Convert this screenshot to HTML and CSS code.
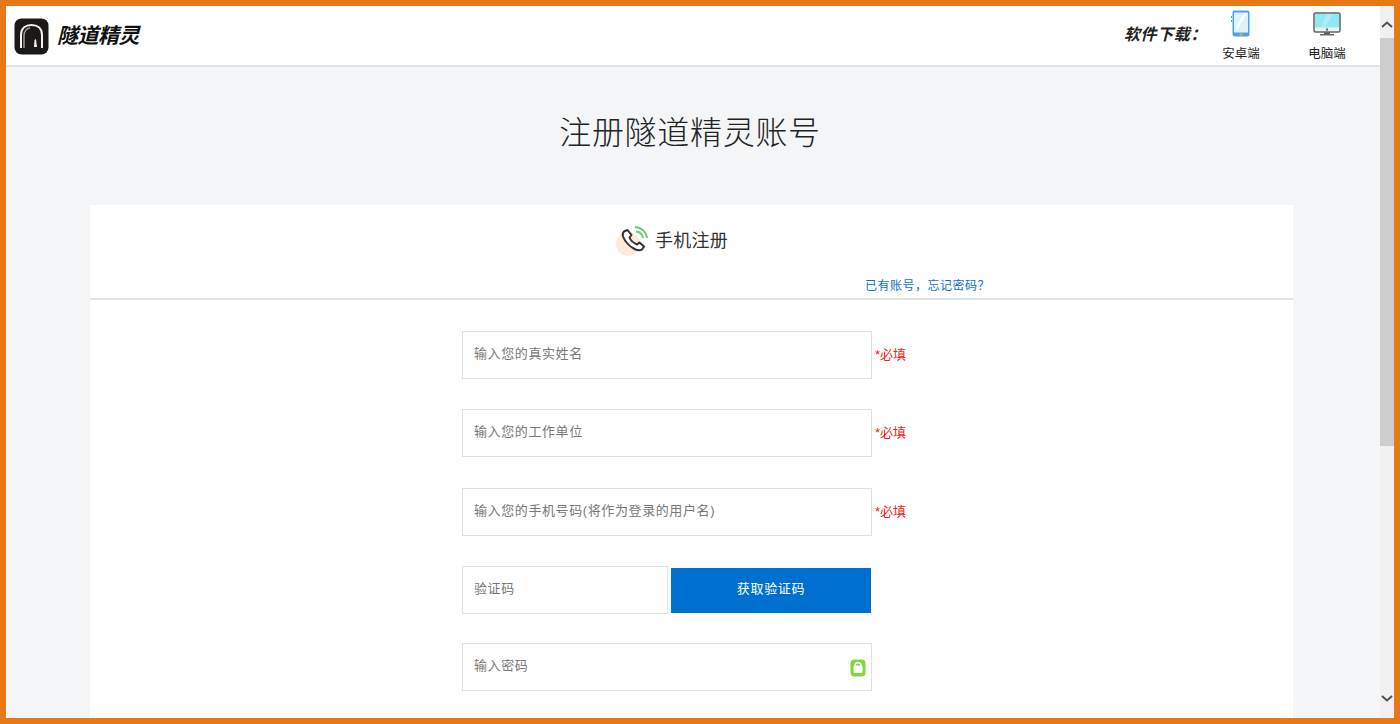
FILE: index.html
```html
<!DOCTYPE html>
<html lang="zh-CN">
<head>
<meta charset="utf-8">
<title>注册隧道精灵账号</title>
<link rel="stylesheet" href="styles.css">
</head>
<body>
<div class="frame">
  <div class="page">
    <header class="topbar">
      <div class="brand">
        <svg class="logo" width="35" height="37" viewBox="0 0 35 37">
          <rect x="0.5" y="0.5" width="34" height="36" rx="7" fill="#1c1a19"/>
          <path d="M7 30V17C7 10 12 7 17.500 7S28 10 28 17V30" fill="none" stroke="#f2f2f2" stroke-width="2"/>
          <path d="M10 30V18C10 13 13 10 16 10" fill="none" stroke="#9a9a9a" stroke-width="1.500"/>
          <path d="M20.500 22L22 21L23 29H20Z" fill="#eeeeee"/>
        </svg>
        <span class="brand-name">隧道精灵</span>
      </div>
      <div class="downloads">
        <span class="dl-label">软件下载：</span>
        <div class="dl-item dl-android">
          <svg width="20" height="27" viewBox="0 0 20 27">
            <rect x="1.500" y="0.500" width="17" height="26" rx="2" fill="#4aa3f0"/>
            <rect x="3" y="2.500" width="14" height="20" fill="#dff1fc"/>
            <path d="M5 17L13 3H16L6 20Z" fill="#ffffff"/>
            <rect x="8.500" y="23.500" width="3" height="2" fill="#f5a623"/>
            <path d="M0.500 6V8M0.500 10V12" stroke="#4aa3f0"/>
          </svg>
          <span class="dl-text">安卓端</span>
        </div>
        <div class="dl-item dl-pc">
          <svg width="28" height="25" viewBox="0 0 28 25">
            <rect x="1" y="1" width="26" height="19" rx="1.500" fill="#f0f0f0" stroke="#5f646a" stroke-width="1.500"/>
            <rect x="2" y="2" width="24" height="13.500" fill="#90e9ee"/>
            <path d="M14 2L20 2L12 15.500L8 15.500Z" fill="#a9f0f3"/>
            <rect x="13" y="16.500" width="2" height="2" fill="#5f646a"/>
            <path d="M11 20H17V22H11ZM7 22H21V23.500H7Z" fill="#5f646a"/>
          </svg>
          <span class="dl-text">电脑端</span>
        </div>
      </div>
    </header>

    <h1 class="title">注册隧道精灵账号</h1>

    <main class="card">
      <div class="tab">
        <div class="tab-head">
          <svg class="tab-icon" width="34" height="34" viewBox="0 0 34 34">
            <circle cx="12" cy="19" r="12" fill="#fdebd8"/>
            <path d="M8 6.500L11.500 5L15.500 10L13.500 12.500C14.500 15 17.500 18 21 19.500L23.500 17.500L28 21.500L26 24.500C24 26 21.500 25.500 18.500 24C13 21 9 16.500 7 11.500C6.500 9.500 7 7.500 8 6.500Z" fill="#ffffff" stroke="#303030" stroke-width="2" stroke-linejoin="round"/>
            <path d="M20 6.500C23.500 7 26.500 9.500 27 13" fill="none" stroke="#6cc96c" stroke-width="1.800"/>
            <path d="M19 2C25.500 2.500 30.500 7 31 13" fill="none" stroke="#6cc96c" stroke-width="1.800"/>
          </svg>
          <span class="tab-label">手机注册</span>
        </div>
        <a class="tab-link" href="#">已有账号，忘记密码？</a>
      </div>

      <form class="form">
        <div class="row">
          <div class="field"><span class="ph">输入您的真实姓名</span></div>
          <span class="req">*必填</span>
        </div>
        <div class="row">
          <div class="field"><span class="ph">输入您的工作单位</span></div>
          <span class="req">*必填</span>
        </div>
        <div class="row row-phone">
          <div class="field"><span class="ph">输入您的手机号码(将作为登录的用户名)</span></div>
          <span class="req">*必填</span>
        </div>
        <div class="row">
          <div class="code-group">
            <div class="field field-code"><span class="ph">验证码</span></div>
            <button class="code-btn" type="button">获取验证码</button>
          </div>
        </div>
        <div class="row row-last">
          <div class="field field-pass">
            <span class="ph">输入密码</span>
            <svg width="16" height="18" viewBox="0 0 16 18">
              <rect x="0.500" y="0.500" width="15" height="17" rx="4" fill="#7ed63c"/>
              <path d="M5 7V6C5 3 11 3 11 6V7" fill="none" stroke="#ffffff" stroke-width="1.500"/>
              <rect x="3.500" y="6.500" width="9" height="7.500" rx="1" fill="#ffffff"/>
            </svg>
          </div>
        </div>
      </form>
    </main>
  </div>

  <div class="scrollbar">
    <svg width="14" height="14" viewBox="0 0 14 14"><path d="M2 9L7 4.500L12 9" fill="none" stroke="#505050" stroke-width="2"/></svg>
    <div class="thumb"></div>
    <div class="track"></div>
    <svg width="14" height="14" viewBox="0 0 14 14"><path d="M2 5L7 9.500L12 5" fill="none" stroke="#505050" stroke-width="2"/></svg>
  </div>
</div>
</body>
</html>
```
FILE: styles.css
```css
* { box-sizing: border-box; }
html, body { margin: 0; height: 100%; overflow: hidden; }
body { font-family: "Liberation Sans", "Noto Sans CJK SC", sans-serif; }

.frame {
  width: 1400px;
  height: 724px;
  border: 6px solid #e67817;
  display: flex;
  overflow: hidden;
}
.page { flex: 1; min-width: 0; background: #f4f5f7; overflow: hidden; }

.topbar {
  height: 61px;
  background: #fff;
  border-bottom: 2px solid #e2e2e2;
  display: flex;
  justify-content: space-between;
  padding-left: 8px;
}
.brand { display: flex; align-items: center; gap: 8px; padding-top: 1px; }
.logo { display: block; }
.brand-name {
  font-size: 21px;
  font-weight: 700;
  font-style: italic;
  letter-spacing: -0.500px;
  color: #111;
  margin-top: -4px;
}
.downloads { display: flex; align-items: flex-start; }
.dl-label {
  font-size: 16px;
  font-weight: 700;
  font-style: italic;
  letter-spacing: 0.600px;
  color: #222;
  margin-top: 15px;
  margin-right: 14px;
}
.dl-item { display: flex; flex-direction: column; align-items: center; width: 40px; }
.dl-item svg { display: block; height: 27px; }
.dl-pc { margin-left: 46px; margin-right: 33px; }
.dl-android { margin-top: 4px; }
.dl-pc { margin-top: 5px; }
.dl-text { font-size: 12.500px; line-height: 17px; color: #222; margin-top: 9px; white-space: nowrap; }
.dl-pc .dl-text { margin-top: 8px; }

.title {
  margin: 0;
  height: 138px;
  padding: 44px 6px 0 0;
  text-align: center;
  font-size: 32px;
  line-height: 44px;
  font-weight: 300;
  letter-spacing: 0.700px;
  color: #222;
}

.card {
  margin: 0 87px 0 84px;
  background: #fff;
  height: 600px;
}
.tab {
  position: relative;
  height: 95px;
  border-bottom: 2px solid #e2e2e2;
}
.tab-head {
  display: flex;
  align-items: center;
  justify-content: center;
  padding-top: 20px;
  gap: 5px;
  padding-right: 39px;
}
.tab-icon { display: block; }
.tab-label { font-size: 18px; color: #333; letter-spacing: 0.250px; margin-bottom: 7px; }
.tab-link {
  position: absolute;
  left: 775px;
  top: 72px;
  font-size: 12px;
  line-height: 18px;
  letter-spacing: 0.500px;
  color: #0e6fc9;
  text-decoration: none;
}

.form {
  padding: 31px 0 0 372px;
  display: flex;
  flex-direction: column;
  gap: 30px;
}
.row { display: flex; align-items: center; height: 48px; }
.row-phone { margin-top: 1px; }
.row-last { margin-top: -1px; }
.field {
  width: 410px;
  height: 48px;
  border: 1px solid #e0e0e0;
  background: #fff;
  display: flex;
  align-items: center;
  justify-content: space-between;
  padding: 0 11px;
}
.ph { font-size: 13px; letter-spacing: 0.600px; color: #777; margin-top: -6px; }
.req { font-size: 13px; color: #f01818; margin-left: 3px; margin-top: -3px; }
.code-group { display: flex; align-items: center; width: 410px; }
.field-code { width: 206px; }
.code-btn {
  width: 200px;
  height: 45px;
  margin: 1px 0 0 3px;
  border: 0;
  background: #0070d0;
  color: #fff;
  font-family: inherit;
  font-size: 13px;
  letter-spacing: 0.700px;
  padding: 0 0 6px;
}
.field-pass svg { display: block; margin-right: -6px; margin-top: 1px; }

.scrollbar {
  width: 14px;
  background: #f0f0f0;
  display: flex;
  flex-direction: column;
}
.scrollbar svg { display: block; flex: none; }
.scrollbar svg:first-child { margin-top: 12px; }
.scrollbar svg:last-child { margin-bottom: 13px; }
.thumb { height: 408px; background: #cdcdcd; margin-top: 6px; }
.track { flex: 1; }
```
